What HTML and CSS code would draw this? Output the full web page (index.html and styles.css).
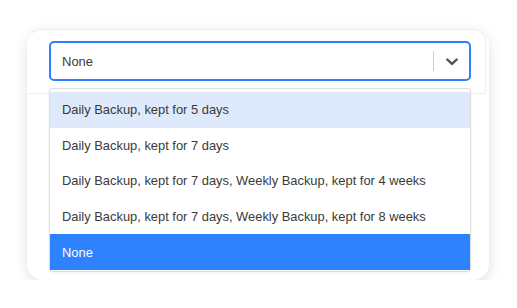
FILE: index.html
```html
<!DOCTYPE html>
<html>
<head>
<meta charset="utf-8">
<link rel="stylesheet" href="styles.css">
</head>
<body>
<div class="card">
  <div class="panel">
    <div class="select">
      <div class="control">
        <span class="value">None</span>
        <div class="indicators">
          <span class="sep"></span>
          <svg class="chev" width="12" height="8" viewBox="0 0 12 8"><path d="M1.4 1.6 L6 5.9 L10.6 1.6" fill="none" stroke="#555" stroke-width="2.5" stroke-linecap="round" stroke-linejoin="round"/></svg>
        </div>
      </div>
      <div class="menu">
        <div class="opt focus">Daily Backup, kept for 5 days</div>
        <div class="opt">Daily Backup, kept for 7 days</div>
        <div class="opt">Daily Backup, kept for 7 days, Weekly Backup, kept for 4 weeks</div>
        <div class="opt">Daily Backup, kept for 7 days, Weekly Backup, kept for 8 weeks</div>
        <div class="opt selected">None</div>
      </div>
    </div>
  </div>
</div>
</body>
</html>
```
FILE: styles.css
```css
html, body { margin: 0; background: #fff; }
body {
  padding: 29px 0 0 27px;
  font-family: "Liberation Sans", Arial, sans-serif;
  color: #3a3a3a;
}
.card {
  width: 462px;
  height: 251px;
  background: #fff;
  border-radius: 16px;
  box-shadow: 0 4px 14px rgba(0,0,0,0.12);
}
.panel {
  border: 1px solid #eee;
  border-left-color: transparent;
  border-radius: 14px 12px 0 0;
  padding: 11px 0 0 21px;
  width: 436px;
  height: 52px;
}
.select { position: relative; width: 422px; }
.control {
  height: 40px;
  box-sizing: border-box;
  border: 2px solid #2f80fc;
  border-radius: 5px;
  display: flex;
  align-items: center;
  padding-left: 11px;
  background: #fff;
}
.value { flex: 1; font-size: 13px; color: #3a3a3a; }
.indicators { display: flex; align-items: center; height: 100%; }
.sep { width: 1px; height: 20px; background: #ccc; }
.chev { margin: 1px 11px 0 12px; }
.menu {
  position: absolute;
  top: 47px;
  left: 0;
  width: 422px;
  box-sizing: border-box;
  background: #fff;
  border: 1px solid #ddd;
  border-radius: 4px;
  padding: 3px 0 1px;
  box-shadow: 0 1px 3px rgba(0,0,0,0.06);
}
.opt {
  height: 35.6px;
  display: flex;
  align-items: center;
  padding-left: 12px;
  font-size: 12.9px;
  color: #3a3a3a;
}
.opt.focus { background: #dee9fc; }
.opt.selected { background: #2f82fd; color: #fff; }
```
